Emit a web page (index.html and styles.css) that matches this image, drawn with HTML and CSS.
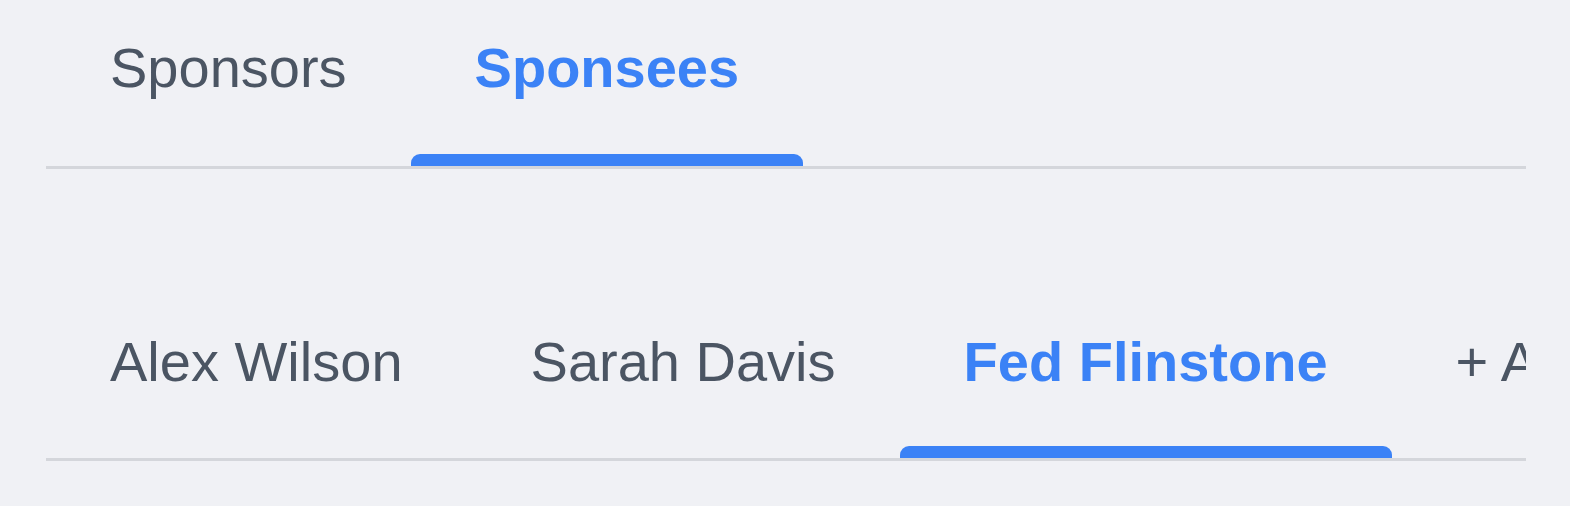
FILE: index.html
```html
<!DOCTYPE html>
<html lang="en">
<head>
<meta charset="utf-8">
<title>Sponsees</title>
<link rel="stylesheet" href="styles.css">
</head>
<body>
<div class="page">
  <nav class="tabs tabs--main">
    <div class="tab">Sponsors</div>
    <div class="tab tab--active">Sponsees</div>
  </nav>
  <nav class="tabs tabs--sub">
    <div class="tab">Alex Wilson</div>
    <div class="tab">Sarah Davis</div>
    <div class="tab tab--active">Fed Flinstone</div>
    <div class="tab">+ Add Sponsee</div>
  </nav>
</div>
</body>
</html>
```
FILE: styles.css
```css
html, body {
  margin: 0;
  padding: 0;
  background: #f0f1f5;
}

body {
  font-family: "Liberation Sans", Arial, Helvetica, sans-serif;
  color: #4b5563;
}

.page {
  width: 1480px;
  margin-left: 46px;
  display: flex;
  flex-direction: column;
  gap: 123px;
}

.tabs {
  display: flex;
  overflow: hidden;
  border-bottom: 3px solid #d4d6db;
}

.tab {
  position: relative;
  flex: 0 0 auto;
  white-space: nowrap;
  font-size: 56px;
  line-height: 64px;
  padding: 36px 64px 66px;
}

.tabs--sub .tab {
  padding-top: 38px;
  padding-bottom: 64px;
}

.tab--active {
  color: #3b82f6;
  font-weight: 700;
}

.tab--active::after {
  content: "";
  position: absolute;
  left: 0;
  right: 0;
  bottom: 0;
  height: 12px;
  background: #3b82f6;
  border-radius: 9px 9px 0 0;
}
```
